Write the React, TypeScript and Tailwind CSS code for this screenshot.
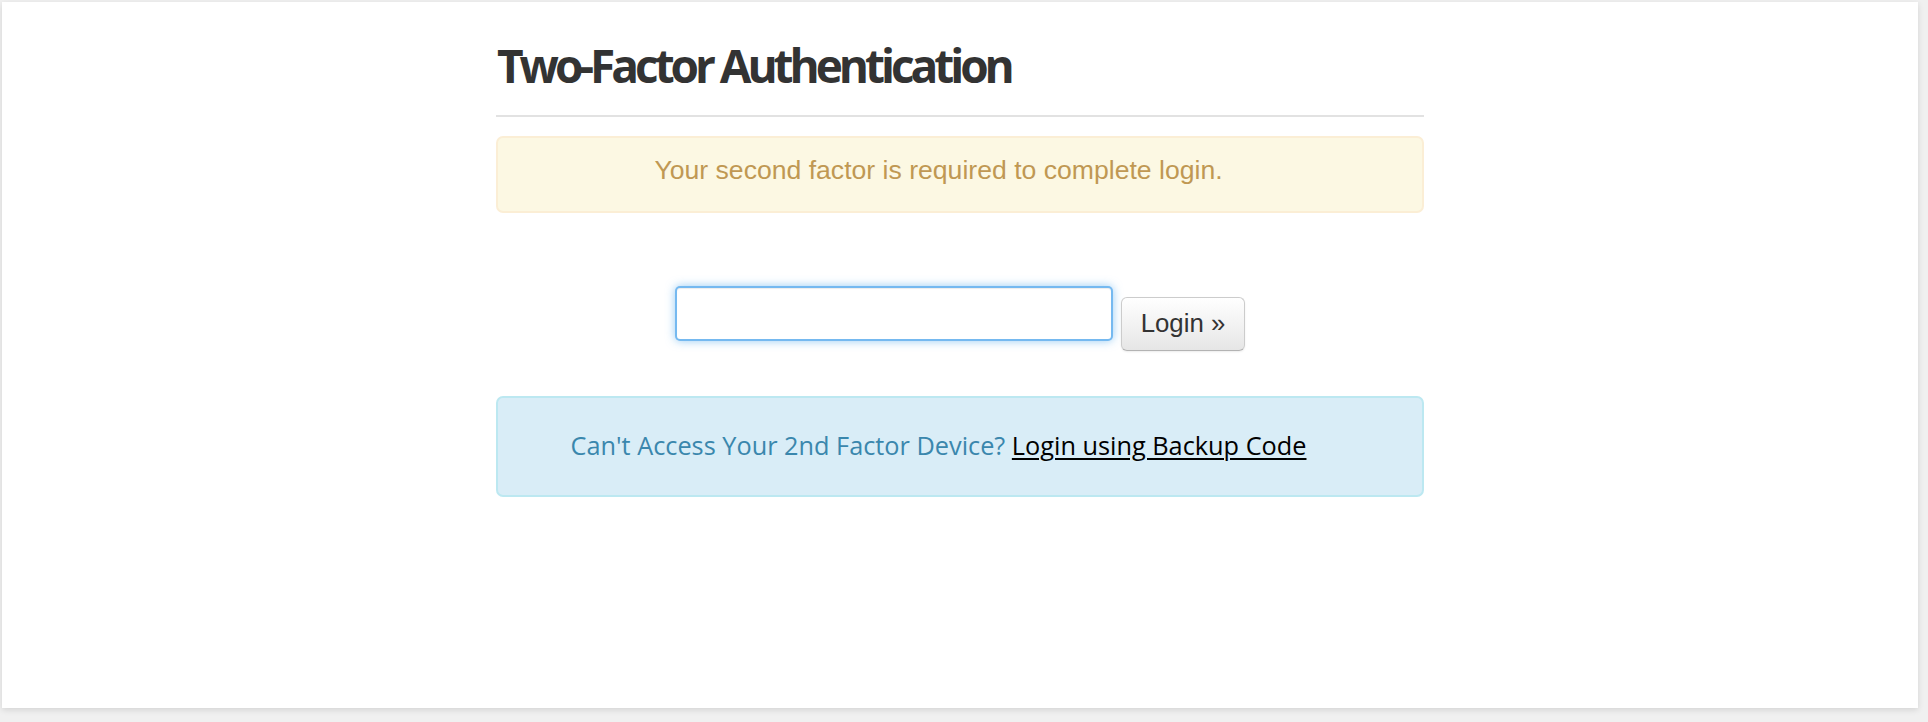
import React from "react";

export default function App() {
  return (
    <div className="w-[1928px] h-[722px] bg-[#f0f0f0] overflow-hidden">
      <div className="ml-[2px] mt-[2px] w-[1916px] h-[706px] bg-white shadow-[0_2px_6px_rgba(0,0,0,0.12)]">
        <div className="w-[928px] mx-auto pt-[37px]">
          <h1 className="font-['Open_Sans',sans-serif] font-bold text-[46px] leading-[53px] tracking-[-4.05px] text-[#333333] pl-[1px]">
            Two-Factor Authentication
          </h1>
          <div className="mt-[23px] h-[2px] bg-[#e2e2e2]" />
          <div className="mt-[19px] h-[77px] border-2 border-[#fbeed5] bg-[#fcf8e3] rounded-[7px] pl-[17px] pr-[60px] pt-[17px] text-center">
            <p className="font-['Liberation_Sans',Arial,sans-serif] text-[26.6px] leading-[31px] text-[#c09853]">
              Your second factor is required to complete login.
            </p>
          </div>
          <div className="mt-[73px] flex justify-center items-start gap-[8px]">
            <input
              type="text"
              className="w-[438px] h-[55px] rounded-[5px] border-2 border-[rgba(82,168,236,0.8)] bg-white outline-none shadow-[inset_0_1px_1px_rgba(0,0,0,0.075),0_0_10px_rgba(82,168,236,0.6)] px-[8px] font-['Liberation_Sans',Arial,sans-serif] text-[22px]"
            />
            <button className="mt-[10.7px] w-[124px] h-[54px] rounded-[6px] border border-[#cccccc] border-b-[#b3b3b3] bg-gradient-to-b from-white to-[#e6e6e6] shadow-[inset_0_1px_0_rgba(255,255,255,0.2),0_1px_2px_rgba(0,0,0,0.08)] font-['Liberation_Sans',Arial,sans-serif] text-[25.8px] leading-[31px] text-[#333333] flex items-center justify-center">
              Login »
            </button>
          </div>
          <div className="mt-[45px] h-[101px] border-2 border-[#bce8f1] bg-[#d9edf7] rounded-[7px] pl-[17px] pr-[60px] pt-[32px] text-center">
            <p className="font-['Open_Sans',sans-serif] text-[25.3px] leading-[31px] tracking-[0px] text-[#3a87ad]">
              Can't Access Your 2nd Factor Device?{" "}
              <a href="#" className="text-black underline decoration-[2px] underline-offset-[3px]">
                Login using Backup Code
              </a>
            </p>
          </div>
        </div>
      </div>
    </div>
  );
}
